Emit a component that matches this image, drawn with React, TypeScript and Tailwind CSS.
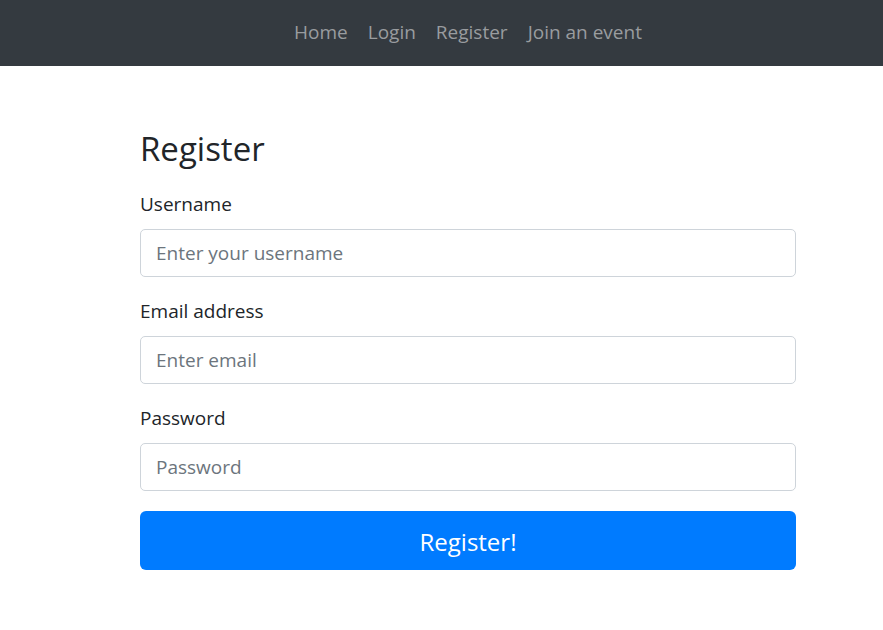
const links = ["Home", "Login", "Register", "Join an event"];

const fields = [
  { id: "username", label: "Username", type: "text", placeholder: "Enter your username" },
  { id: "email", label: "Email address", type: "email", placeholder: "Enter email" },
  { id: "password", label: "Password", type: "password", placeholder: "Password" },
];

export default function App() {
  return (
    <div className="min-h-screen bg-white font-['Open_Sans',sans-serif] text-[#212529]">
      <nav className="flex justify-center gap-5 bg-[#343a40] pt-[18px] pb-5 pl-[53px] text-[19px] leading-[28px]">
        {links.map((link) => (
          <a key={link} href="#" className="text-[#999c9f] hover:text-white">
            {link}
          </a>
        ))}
      </nav>
      <main className="pt-[62px] pr-[87px] pl-[140px]">
        <form onSubmit={(e) => e.preventDefault()}>
          <h1 className="mb-5 text-[33px] leading-[42px]">Register</h1>
          {fields.map((f) => (
            <div key={f.id} className="mb-5">
              <label htmlFor={f.id} className="mb-[11px] block text-[19px] leading-[28px]">
                {f.label}
              </label>
              <input
                id={f.id}
                type={f.type}
                placeholder={f.placeholder}
                className="block h-12 w-full rounded-[5px] border border-[#ced4da] px-[15px] text-[19px] placeholder:text-[#6c757d]"
              />
            </div>
          ))}
          <button type="submit" className="h-[59px] w-full rounded-[6px] bg-[#007bff] pt-0.5 text-2xl text-white">
            Register!
          </button>
        </form>
      </main>
    </div>
  );
}
